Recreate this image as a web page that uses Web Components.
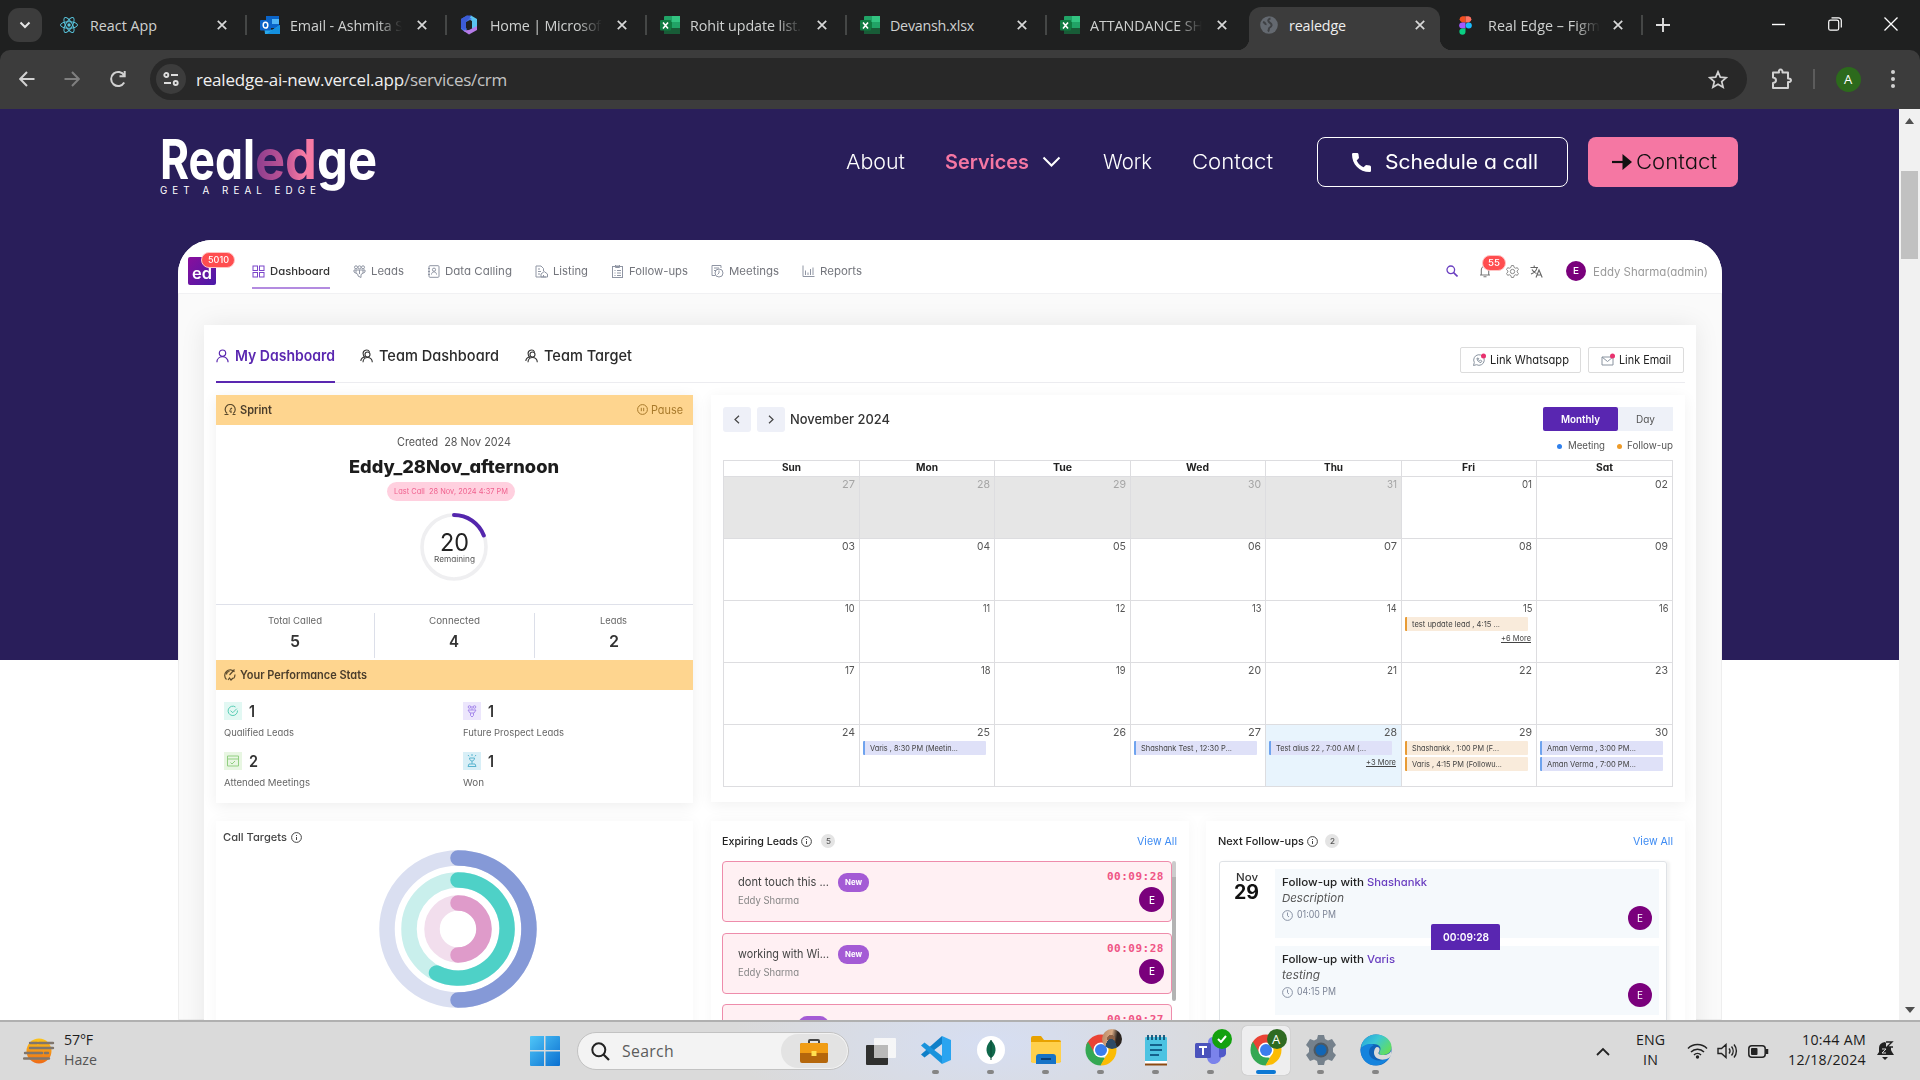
<!DOCTYPE html>
<html lang="en"><head><meta charset="utf-8"><title>realedge</title>
<style>html,body{margin:0;width:1920px;height:1080px;overflow:hidden;background:#fff}</style></head>
<body><desktop-screen></desktop-screen>
<script>
const fits=[];
// Text run set to a known advance width: web page text stretches its glyphs, system text its tracking.
class FitText extends HTMLElement{
  connectedCallback(){
    if(this.shadowRoot)return;
    const a=n=>this.getAttribute(n);
    this.attachShadow({mode:'open'}).innerHTML=`<style>:host{display:inline-block;vertical-align:top;flex:none;white-space:pre;text-align:left;width:${a('w')}px}span{display:block;width:max-content;white-space:pre;transform-origin:0 50%;font-size:${a('s')}px;font-weight:${a('b')||400};${a('c')?'color:'+a('c'):''}}:host([u]) span{text-decoration:underline}:host([g]) span{background:linear-gradient(90deg,#8a3c8d,#c25696 50%,#f77aa4 80%);-webkit-background-clip:text;background-clip:text;color:transparent}</style><span><slot></slot></span>`;
    fits.push(this);
  }
  fit(){
    const s=this.shadowRoot.querySelector('span'),w=+this.getAttribute('w'),n=s.getBoundingClientRect().width;
    if(!n)return;
    if(getComputedStyle(this).fontFamily.startsWith('Inter')&&!this.hasAttribute('track'))s.style.transform=`scaleX(${w/n})`;
    else s.style.letterSpacing=((w-n)/this.textContent.length)+'px';
  }
}
customElements.define('fit-text',FitText);
const T=(t,w,s,b,c,x)=>`<fit-text w="${w}" s="${s}" b="${b||400}" ${c?`c="${c}"`:''} ${x||''}>${t}</fit-text>`;
const svg=(w,h,vb,body,st)=>`<svg width="${w}" height="${h}" viewBox="${vb}" fill="none" style="flex:none;display:block;${st||''}">${body}</svg>`;
const def=(n,css,html)=>customElements.define(n,class extends HTMLElement{
  connectedCallback(){if(!this.shadowRoot)this.attachShadow({mode:'open'}).innerHTML=`<style>*{box-sizing:border-box}:host{display:block;box-sizing:border-box}${css}</style>`+(typeof html=='function'?html(this):html)}
});
const excel=svg(20,18,'0 0 20 18','<rect x="4" width="16" height="18" rx="1" fill="#21a366"/><rect x="12" width="8" height="6" fill="#33c481"/><rect x="4" y="6" width="8" height="6" fill="#107c41"/><rect x="4" y="12" width="16" height="6" fill="#185c37"/><rect y="4" width="11" height="10.500" rx="1" fill="#107c41"/><path d="M3 6.500l5 6M8 6.500l-5 6" stroke="#fff" stroke-width="1.600"/>');
const fav={
react:svg(18,18,'0 0 18 18','<g stroke="#58c4dc" stroke-width="1"><ellipse cx="9" cy="9" rx="8.500" ry="3.300"/><ellipse cx="9" cy="9" rx="8.500" ry="3.300" transform="rotate(60 9 9)"/><ellipse cx="9" cy="9" rx="8.500" ry="3.300" transform="rotate(120 9 9)"/></g><circle cx="9" cy="9" r="1.700" fill="#58c4dc"/>'),
outlook:svg(20,18,'0 0 20 18','<rect x="6" width="13" height="12" fill="#0a64c8"/><rect x="12" y="3" width="7" height="5" fill="#50b5f5"/><path d="M4 9l8 5 8-5v9H5z" fill="#28a8ea"/><path d="M12 14l8-5v9H7z" fill="#1490df"/><rect y="4" width="11" height="10.500" rx="1" fill="#0a64c8"/><ellipse cx="5.500" cy="9.200" rx="2.300" ry="2.900" stroke="#fff" stroke-width="1.500"/>'),
m365:svg(18,20,'0 0 18 20','<path d="M11 .5L17 4v8l-5 2V6L7 3z" fill="#5ac4f0"/><path d="M7 .5L1 4v10l4 3 2-3-1-1V7l6-3z" fill="#4474e0"/><path d="M7 .500L11.500.500 6 7v6l-1 2-4-2V4z" fill="#3c5cd6"/><path d="M3 15.500l6 4 8-4.500v-4l-8 4z" fill="#b57be8"/>'),
excel,
globe:svg(18,18,'0 0 18 18','<circle cx="9" cy="9" r="8.800" fill="#646970"/><path d="M10.500 2.500c-2 .5-3 2-1.500 3.500s3 1.500 2.500 3.500-2 1.500-2.500 3 0 2-1 3M3 6c1.500.5 3 1.500 2.500 3" stroke="#3f4144" stroke-width="2"/>'),
figma:svg(13,19,'0 0 14 20','<path d="M7 0H3.500a3.400 3.400 0 0 0 0 6.700H7z" fill="#f24e1e"/><path d="M7 0h3.500a3.400 3.400 0 0 1 0 6.700H7z" fill="#ff7262"/><path d="M7 6.700H3.500a3.300 3.300 0 0 0 0 6.600H7z" fill="#a259ff"/><circle cx="10.500" cy="10" r="3.300" fill="#1abcfe"/><path d="M7 13.300H3.500A3.300 3.300 0 1 0 7 16.700z" fill="#0acf83"/>')};
const X=svg(10,10,'0 0 10 10','<path d="M.8.8l8.400 8.400M9.200.8L.8 9.200" stroke="#d8d8d8" stroke-width="1.700"/>');

def('browser-tab',`:host{flex:none;width:200px;height:50px;display:flex;align-items:flex-start;padding:7px 6px 0 3px;font-family:"Open Sans",sans-serif}
:host([last]){width:196px}
.b{position:relative;width:191px;height:43px;display:flex;align-items:center;padding:0 15px 7px 11px;border-radius:12px 12px 0 0;color:#cfd1d0}
:host([last]) .b{width:187px;padding-left:10px}
:host([active]) .b{background:#3c3c3c;color:#eee}
:host([active]) .b:before,:host([active]) .b:after{content:"";position:absolute;bottom:0;width:12px;height:12px}
:host([active]) .b:before{left:-12px;background:radial-gradient(circle at 0 0,transparent 12px,#3c3c3c 12.5px)}
:host([active]) .b:after{right:-12px;background:radial-gradient(circle at 100% 0,transparent 12px,#3c3c3c 12.5px)}
.i{width:20px;flex:none}.t{margin-left:9px;width:112px;overflow:hidden;line-height:24px;height:25px;padding-top:1px;flex:none}:host(:not([active]):not([last])) .t{margin-left:10px}
.fade{-webkit-mask-image:linear-gradient(90deg,#000 78%,transparent 100%)}.x{margin-left:auto;margin-right:-2px}:host([active]) .x{margin-right:0}
.s{width:2px;height:20px;background:#454746;margin:8px -7px 0 auto}`,
e=>`<div class="b"><div class="i">${fav[e.getAttribute('icon')]}</div><div class="t ${e.getAttribute('w')>105?'fade':''}">${T(e.getAttribute('label'),e.getAttribute('w'),14.3)}</div><div class="x">${X}</div></div>${e.hasAttribute('sep')?'<div class="s"></div>':''}`);

def('tab-strip',`:host{display:flex;height:50px;background:#1f2020;padding-left:8px}.c{width:34px;height:34px;border-radius:11px;background:#3c3c3c;margin:8px 4px 0 0;display:grid;place-items:center}
.p{margin:18px 0 0 14px}.w{margin-left:auto;display:flex;align-items:center;height:48px;gap:42px;padding-right:22px}`,
`<div class="c">${svg(12,8,'0 0 12 8','<path d="M1.500 1.500L6 6l4.500-4.500" stroke="#e6e6e6" stroke-width="2"/>')}</div>
<browser-tab icon="react" label="React App" w="67" sep></browser-tab><browser-tab icon="outlook" label="Email - Ashmita S" w="113" sep></browser-tab><browser-tab icon="m365" label="Home | Microsof" w="111" sep></browser-tab><browser-tab icon="excel" label="Rohit update list." w="111" sep></browser-tab><browser-tab icon="excel" label="Devansh.xlsx" w="84" sep></browser-tab><browser-tab icon="excel" label="ATTANDANCE SH" w="113"></browser-tab><browser-tab icon="globe" label="realedge" w="57" active></browser-tab><browser-tab icon="figma" label="Real Edge – Figm" w="112" last sep></browser-tab>
<div class="p">${svg(14,14,'0 0 14 14','<path d="M7 0v14M0 7h14" stroke="#ddd" stroke-width="1.900"/>')}</div>
<div class="w">${svg(14,14,'0 0 14 14','<path d="M0 7.500h13" stroke="#fff" stroke-width="1.400"/>')}${svg(14,14,'0 0 14 14','<rect x=".7" y="3.200" width="10" height="10" rx="1.800" stroke="#fff" stroke-width="1.200"/><path d="M3.500.8h7a2.800 2.800 0 0 1 2.800 2.800v7" stroke="#fff" stroke-width="1.200"/>')}${svg(14,14,'0 0 14 14','<path d="M.5.500l13 13M13.500.500l-13 13" stroke="#fff" stroke-width="1.300"/>')}</div>`);

def('address-bar',`:host{height:59px;background:#1f2020}.r{background:#3c3c3c;border-radius:10px 10px 0 0;height:59px;display:flex;align-items:center;padding:0 24px 1px 19px;font-family:"Open Sans",sans-serif}
.o{height:42px;width:1597px;border-radius:21px;background:#282828;margin-left:23px;display:flex;align-items:center;padding:0 19px 0 6px;line-height:30px;flex:none}
.o i{width:30px;height:30px;border-radius:50%;background:#3c3c3c;display:grid;place-items:center;margin-right:10px}
.a{width:25px;height:25px;border-radius:50%;background:#2c6a1c;color:#fff;display:grid;place-items:center;margin:0 30px 0 21px;line-height:20px}`,
`<div class="r">${svg(16,16,'0 0 16 16','<path d="M15.500 8H1.500M8 1L1.200 8 8 15" stroke="#d2d2d2" stroke-width="2"/>')}
${svg(16,16,'0 0 16 16','<path d="M.5 8h14M8 1l6.800 7L8 15" stroke="#7f7f7f" stroke-width="2"/>','margin-left:29px')}
${svg(18,18,'0 0 18 18','<path d="M15.200 12.500a7 7 0 1 1 0-7M15.700 1v5.200h-5.200" stroke="#d2d2d2" stroke-width="2"/>','margin-left:29px')}
<div class="o"><i>${svg(16,14,'0 0 16 14','<g stroke="#ddd" stroke-width="1.900"><circle cx="3.300" cy="3" r="2"/><path d="M8 3h7M1 11h7"/><circle cx="12.700" cy="11" r="2"/></g>')}</i><div style="padding-top:2px">${T('realedge-ai-new.vercel.app',208,17,400,'#f0f0f0')}${T('/services/crm',103,17,400,'#c4c4c4')}</div>
${svg(20,19,'0 0 20 19','<path d="M10 1.800l2.300 5.300 5.900.5-4.500 3.900 1.400 5.700L10 14.200l-5.100 3 1.400-5.700L1.800 7.600l5.900-.5z" stroke="#d2d2d2" stroke-width="1.700"/>','margin-left:auto')}</div>
${svg(21,22,'0 0 21 22','<path d="M2 4.500h6c-1-4 4-4 3.500 0H17v6c4-.5 4 4 0 3.500V20H2v-5c4-.5 4-5 0-5.500z" stroke="#d2d2d2" stroke-width="2" stroke-linejoin="round"/>','margin-left:24px')}
<div style="width:2px;height:20px;background:#5c5c5c;margin-left:21px"></div><div class="a">${T('A',9,13,400)}</div>${svg(4,18,'0 0 4 18','<circle cx="2" cy="2" r="2" fill="#d2d2d2"/><circle cx="2" cy="9" r="2" fill="#d2d2d2"/><circle cx="2" cy="16" r="2" fill="#d2d2d2"/>','')}</div>`);

def('site-header',`:host{height:131px;display:flex;padding-left:160px;color:#fff;align-items:flex-start}
.l{width:218px;margin-top:21px;height:90px}.m{display:flex;line-height:58px;height:58px}
.tag{line-height:12px;margin-top:-3px}
nav{margin:28px 0 0 468px;display:flex;align-items:center;height:50px;line-height:30px}
.b{display:flex;align-items:center;height:50px;border-radius:8px}.o{width:251px;border:1px solid #fff;margin-left:44px;padding-left:34px}.p{width:150px;background:#f577a3;margin-left:20px;padding-left:24px}`,
`<div class="l"><div class="m">${T('Real',95,55,700)}${T('ed',62,55,700,'','g')}${T('ge',60,55,700)}</div><div class="tag">${T('GET A REAL EDGE',161,9.8,400,'','track')}</div></div>
<nav>${T('About',59,20.3,300)}<span style="width:40px"></span>${T('Services',84,20,600,'#f577a3')}${svg(19,12,'0 0 19 12','<path d="M1.500 1.500l8 8 8-8" stroke="#fff" stroke-width="2"/>','margin-left:13px')}<span style="width:42px"></span>${T('Work',49,20.3,300)}<span style="width:40px"></span>${T('Contact',81,20.3,300)}
<div class="b o">${svg(19,19,'0 0 19 19','<path d="M0 1.200Q0 0 1.200 0h4Q6.300 0 6.500 1.200L7 5 4.700 7.500q2 4.500 6.800 6.800L14 12l3.800.6q1.200.2 1.200 1.400v3.800q0 1.200-1.200 1.200C7 19 0 11 0 1.200z" fill="#fff"/>')}<span style="width:14px"></span>${T('Schedule a call',153,20.3,400)}</div>
<div class="b p">${svg(20,16,'0 0 20 16','<path d="M0 8h13" stroke="#111" stroke-width="2.200"/><path d="M10.500 0v16L20 8z" fill="#111"/>')}<span style="width:4px"></span>${T('Contact',81,20.3,300,'#111')}</div></nav>`);

const g='#8f95a3',ic=(b,c)=>svg(13,13,'0 0 13 13',`<g stroke="${c||g}" stroke-width="1">${b}</g>`);
const nI={dash:ic('<rect x="1" y="1" width="4.500" height="4.500"/><rect x="7.500" y="1" width="4.500" height="4.500"/><rect x="1" y="7.500" width="4.500" height="4.500"/><rect x="7.500" y="7.500" width="4.500" height="4.500"/>','#7b45c9'),
leads:ic('<circle cx="3" cy="2.300" r="1.500"/><circle cx="6.500" cy="2.300" r="1.500"/><circle cx="10" cy="2.300" r="1.500"/><path d="M1 5h11v2L8 9.500v3L5 11V9.500L1 7zM3 5v3M6.500 5v4M10 5v3"/>'),
data:ic('<rect x="2" y=".7" width="10" height="11.600" rx="1"/><circle cx="7" cy="4.700" r="1.600"/><path d="M4.500 9.500c0-3.500 5-3.500 5 0M1 3.500h2M1 6.500h2M1 9.500h2"/>'),
list:ic('<path d="M11 12H1V1h5l2.500 2.500V6M3 4h2M3 6.500h3M3 9h2M6 12V9l3.200-2.500L12.500 9v3zM8.500 12v-2"/>'),
fol:ic('<rect x="1.500" y="1.500" width="10" height="11"/><path d="M4.500 0h4v2.500h-4zM3.500 5.500h1M6 5.500h4M3.500 8h1M6 8h4M3.500 10.500h1M6 10.500h4"/>'),
meet:ic('<path d="M4 10.500H1v-10h9V3M3 3h5M3 5.500h2"/><circle cx="8" cy="8" r="4"/><path d="M8 5.500V8L6.500 9.500"/>'),
rep:ic('<path d="M1 .5v11h11.500M3.500 10V5.500M6 10V7.500M8.500 10V4M11 10V2.500"/>')};
def('crm-nav',`:host{display:flex;height:54px;border-bottom:1px solid #f1f1f3;padding:0 14px 0 10px;background:#fff;line-height:20px}
.q{position:relative;width:28px;height:28px;margin-top:17px;border-radius:2px;background:linear-gradient(135deg,#8a0f9c,#4a1aa8);display:grid;place-items:end center;line-height:20px;padding-bottom:2px}
.bd{position:absolute;background:#ff4d4f;border:1px solid #ffc4c4;border-radius:9px;color:#fff;display:grid;place-items:center;height:16px;line-height:14px}
.m{display:flex;gap:23px;margin-left:36px}.i{display:flex;align-items:center;gap:5px;padding-top:15px;height:49px;border-bottom:2px solid transparent}.on{border-color:#b38be0}
.r{margin-left:auto;display:flex;align-items:center;height:62px}.a{width:20px;height:20px;border-radius:50%;background:#7a007c;display:grid;place-items:center}`,
`<div class="q">${T('ed',20,16,600,'#fff')}<span class="bd" style="left:13px;top:-5px;width:34px">${T('5010',21,8.5,500)}</span></div>
<div class="m">${[['dash','Dashboard',60],['leads','Leads',33],['data','Data Calling',67],['list','Listing',35],['fol','Follow-ups',59],['meet','Meetings',50],['rep','Reports',42]].map((x,i)=>`<div class="i ${i?'':'on'}">${nI[x[0]]}${T(x[1],x[2],11,i?400:500,i?'#73757c':'#333')}</div>`).join('')}</div>
<div class="r">${svg(12,12,'0 0 12 12','<circle cx="4.800" cy="4.800" r="3.800" stroke="#6a3fc0" stroke-width="1.300"/><path d="M7.600 7.600L11.500 11.500" stroke="#6a3fc0" stroke-width="1.600"/>')}
<span style="position:relative;margin-left:21px">${svg(12,14,'0 0 12 14','<path d="M1 11h10M2.300 11V6a3.700 3.700 0 0 1 7.400 0v5M4.500 12.800h3" stroke="#777" stroke-width="1.100"/>')}<span class="bd" style="left:3px;top:-9px;width:24px">${T('55',12,9,500)}</span></span>
${svg(13,13,'0 0 24 24','<path d="M10 1h4l1 3.500 2.500 1.400L21 5l2 3.500-2.500 2.500v2L23 15.500 21 19l-3.500-1-2.500 1.500L14 23h-4l-1-3.500L6.500 18 3 19l-2-3.500L3.500 13v-2L1 8.500 3 5l3.500.900L9 4.500z" stroke="#888" stroke-width="1.800"/><circle cx="12" cy="12" r="4" stroke="#888" stroke-width="1.800"/>','margin-left:15px')}
${svg(13,13,'0 0 13 13','<path d="M.5 2.500h7.500M4.200.5v2M7 2.500C6.500 6 3.500 8 1 9M2 4.500c1 2 3 3.500 4.500 4M6 12.500l3-7.500 3.200 7.500M7 10h4.300" stroke="#666" stroke-width="1.100"/>','margin-left:11px')}
<span class="a" style="margin:0 7px 0 23px">${T('E',6,9.500,500,'#fff')}</span><span style="padding-top:2px">${T('Eddy Sharma(admin)',115,11.3,400,'#9a9a9a')}</span></div>`);

const person=c=>svg(13,14,'0 0 13 14',`<circle cx="6.500" cy="4.200" r="3.200" stroke="${c}" stroke-width="1.200"/><path d="M.9 13.300c0-7.500 11.200-7.500 11.200 0" stroke="${c}" stroke-width="1.200"/>`);
const team=svg(13,14,'0 0 13 14','<g stroke="#333" stroke-width="1.100"><circle cx="7.500" cy="5.500" r="2.500"/><path d="M3 13.300c0-6.500 9.300-6.500 9.300 0M5 8.500C2.500 6.500 2.200 2 5.500 1.200S9 2 9.500 3M4.500 8C2 8.500 1 10 .8 12"/></g>');
def('crm-tabs',`:host{display:flex;height:58px;border-bottom:1px solid #ececf0;align-items:stretch;line-height:22px}.t{display:flex;gap:6px;align-items:center;height:58px;padding:6px 0 0;border-bottom:2px solid transparent}.on{border-color:#5a27b0;width:119px}
.b{height:26px;border:1px solid #dcdcdc;border-radius:2px;margin-top:22px;display:flex;align-items:center;background:#fff}`,
`<div class="t on" style="margin-right:25px">${person('#5a27b0')}${T('My Dashboard',100,15,600,'#5a27b0')}</div><div class="t" style="margin-right:26px">${team}${T('Team Dashboard',120,15,500,'#2b2b2b')}</div><div class="t">${team}${T('Team Target',88,15,500,'#2b2b2b')}</div>
<div class="b" style="margin-left:auto;width:121px;padding-left:11px">${svg(14,14,'0 0 14 14','<path d="M1.500 12.500l.8-3a5.300 5.300 0 1 1 2.200 2.200zM5 5c0 3 2 4.500 4 4.500l1-1.300-1.500-1-1 .6L6.300 6.500l.5-1z" stroke="#8a94a0" stroke-width="1"/><circle cx="11.500" cy="3" r="2.500" fill="#e8326e"/>')}<span style="width:4px"></span>${T('Link Whatsapp',79,11.4,400,'#222')}</div>
<div class="b" style="margin-left:7px;width:96px;padding-left:12px">${svg(14,14,'0 0 14 14','<path d="M1 4h11v8H1zM1 4l5.500 4.500L12 4" stroke="#8a94a0" stroke-width="1"/><circle cx="11.500" cy="3" r="2.500" fill="#e8326e"/>')}<span style="width:4px"></span>${T('Link Email',52,11.4,400,'#222')}</div><span style="width:1px"></span>`);

const sI=[
svg(18,18,'0 0 18 18','<rect width="18" height="18" fill="#e2f8f3"/><path d="M13.500 8.500a4.700 4.700 0 1 1-2-3.500M6.500 8.700l2.300 2 4-4" stroke="#58cdb5" stroke-width="1"/>'),
svg(18,18,'0 0 18 18','<rect width="18" height="18" fill="#ece6fc"/><g stroke="#a78aec" stroke-width="1"><circle cx="6.500" cy="5" r="1.300"/><circle cx="11.500" cy="5" r="1.300"/><path d="M5 8h8l-2 3H7zM7.500 11v2.500L9 15l1.500-1.500V11M9 4v4"/></g>'),
svg(18,18,'0 0 18 18','<rect width="18" height="18" fill="#e8f6e2"/><path d="M3.500 4h11v10h-11zM3.500 7h11M6.500 10.500L8 12l3-3" stroke="#92cf82" stroke-width="1"/>'),
svg(18,18,'0 0 18 18','<rect width="18" height="18" fill="#d8eff7"/><path d="M6.500 6h5c0 4-5 4-5 0M9 9v3M5 14.500h8L12 12H6zM9 2v2M5 3l1 1.300M13 3l-1 1.300" stroke="#58b4cf" stroke-width="1"/>')];
def('sprint-card',`:host{width:477px;height:408px;background:#fff;box-shadow:0 3px 14px rgba(0,0,0,.07);color:#444}
.h{height:30px;background:#fed58f;display:flex;align-items:center;padding:0 10px 1px 8px;gap:4px;line-height:20px}
.c{display:flex;flex-direction:column;align-items:center;height:179px;padding-right:1px}.pill{height:19px;width:128px;border-radius:10px;background:#ffd0df;display:grid;place-items:center;line-height:16px;margin-right:7px}
.ring{display:grid;margin-top:12px;width:68px;height:68px}.ring>*{grid-area:1/1}.in{display:flex;flex-direction:column;align-items:center;padding-top:16px}
.s{display:flex;height:56px;border-top:1px solid #dfe1ea;align-items:flex-start;padding-top:8px}.s div{flex:1;height:45px;border-right:1px solid #dcdfe9;display:flex;flex-direction:column;align-items:center;line-height:15px;gap:6px}.s div:last-child{border:0}
.g{display:grid;grid-template-columns:239px 1fr;padding:12px 0 0 8px;grid-auto-rows:50px}.n{display:flex;align-items:center;gap:7px;height:18px;line-height:17px}.l{line-height:16px;margin-top:5px}`,
`<div class="h">${svg(12,12,'0 0 12 12','<path d="M4.500 10.500H.5M11.500 10.500H8.500M3.200 9.500a5 5 0 1 1 6 0M6 5.500l2-1.500M5 7h2v2" stroke="#5b4a2c" stroke-width="1.200"/>')}${T('Sprint',32,11.3,600,'#4a3d2b')}<span style="margin-left:auto"></span>${svg(11,11,'0 0 11 11','<circle cx="5.500" cy="5.500" r="4.900" stroke="#a87a2b"/><path d="M4.300 3.800v3.400M6.700 3.800v3.400" stroke="#a87a2b"/>','margin-right:-1px')}${T('Pause',32,11.3,400,'#a87a2b')}</div>
<div class="c"><div style="line-height:18px;margin-top:8px">${T('Created  28 Nov 2024',114,11.2,400,'#555')}</div><div style="line-height:24px;margin-top:4px;height:27px">${T('Eddy_28Nov_afternoon',210,18,800,'#1c1c1c')}</div>
<div class="pill">${T('Last Call  28 Nov, 2024 4:37 PM',114,7.7,400,'#f0628f')}</div>
<div class="ring">${svg(68,68,'0 0 68 68','<circle cx="34" cy="34" r="32" stroke="#efeff1" stroke-width="3.600"/><path d="M34 2a32 32 0 0 1 29.800 20.500" stroke="#5426ad" stroke-width="4" stroke-linecap="round"/>')}<div class="in"><span style="line-height:26px">${T('20',29,24.5,400,'#222')}</span><span style="line-height:9px">${T('Remaining',41,7.8,400,'#555')}</span></div></div></div>
<div class="s"><div>${T('Total Called',54,9.4,400,'#666')}${T('5',10,16.5,600,'#333')}</div><div>${T('Connected',51,9.4,400,'#666')}${T('4',10,16.5,600,'#333')}</div><div>${T('Leads',27,9.4,400,'#666')}${T('2',10,16.5,600,'#333')}</div></div>
<div class="h">${svg(13,13,'0 0 13 13','<path d="M11.500 4a5.500 5.500 0 1 0-8 7.500M12 6.500c0 2-.5 3-1.500 4M6.500 7L11.500 1.500M3.500 6.500a3 3 0 0 1 3-3M5 12l1.500-2L8 12l2-2" stroke="#5b4a2c" stroke-width="1.200"/>','margin-left:-1px')}${T('Your Performance Stats',127,11.3,600,'#4a3d2b')}</div>
<div class="g">${[['1','Qualified Leads',70],['1','Future Prospect Leads',101],['2','Attended Meetings',86],['1','Won',21]].map((x,i)=>`<div><div class="n">${sI[i]}${T(x[0],x[0]=='1'?6:9,16.5,600,'#333')}</div><div class="l">${T(x[1],x[2],9.4,400,'#666')}</div></div>`).join('')}</div>`);

// Calendar entries keyed by grid cell: 'b' is a meeting, 'o' a follow-up.
const events={19:[['o','test update lead , 4:15 ...',88],'+6 More'],29:[['b','Varis , 8:30 PM (Meetin...',88]],31:[['b','Shashank Test , 12:30 P...',91]],32:[['b','Test alius 22 , 7:00 AM (...',90],'+3 More'],33:[['o','Shashankk , 1:00 PM (F...',87],['o','Varis , 4:15 PM (Followu...',90]],34:[['b','Aman Verma , 3:00 PM...',89],['b','Aman Verma , 7:00 PM...',89]]};
def('day-cell',`:host{border-right:1px solid #dddde0;border-bottom:1px solid #dddde0;height:62px;padding:1px 4px 0 3px;display:flex;flex-direction:column;color:#555}
:host([out]){background:#e6e6e6;color:#a5a5a5}:host([today]){background:#e8f4fd}
.n{align-self:flex-end;line-height:13px;height:15px}.e{height:14px;margin-bottom:2px;width:123px;border-left:2px solid #6fa3ee;background:#dfe1f8;padding-left:5px;line-height:14px;flex:none;border-radius:1px}.o{border-color:#e89b35;background:#f9ebdb}
.m{align-self:flex-end;line-height:11px;margin-right:1px}`,
e=>{const i=+e.getAttribute('i'),d=i<5?27+i:i-4;return `<div class="n">${T(String(d).padStart(2,'0'),d==11?7:String(d).includes('1')?(d==1||d==31||d==21?10:9.5):13,11,400)}</div>`+(events[i]||[]).map(v=>typeof v=='string'?`<div class="m">${T(v,30,8.2,400,'#444','u')}</div>`:`<div class="e ${v[0]}">${T(v[1],v[2],7.800,400,'#444')}</div>`).join('')});
const chv=d=>svg(6,9,'0 0 6 9',`<path d="${d}" stroke="#444" stroke-width="1.200"/>`);
def('calendar-card',`:host{width:974px;height:407px;background:#fff;box-shadow:0 3px 14px rgba(0,0,0,.06);padding:12px 12px 0 12px}
.t{display:flex;height:25px;align-items:center;line-height:18px}.a{width:28px;height:25px;border-radius:3px;background:#eef0f8;display:grid;place-items:center;margin-right:6px}
.v{height:24px;display:grid;place-items:center;margin-bottom:1px}.l{display:flex;justify-content:flex-end;align-items:center;height:28px;line-height:14px}.d{width:5px;height:5px;border-radius:50%}
.g{display:grid;grid-template-columns:repeat(6,135.5px) 136px;border:1px solid #dddde0;border-right:0;border-bottom:0;width:950px}.h{height:16px;text-align:center;line-height:14px;border-right:1px solid #dddde0;border-bottom:1px solid #dddde0}`,
`<div class="t"><span class="a">${chv('M5 .8L1 4.500l4 3.700')}</span><span class="a" style="margin-right:5px">${chv('M1 .8l4 3.700L1 8.200')}</span><span style="padding-bottom:2px">${T('November 2024',100,13,500,'#333')}</span><span class="v" style="margin-left:auto;width:75px;background:#5926b1;border-radius:2px">${T('Monthly',39,10.3,600,'#fff')}</span><span class="v" style="width:55px;background:#eef1f8">${T('Day',19,10.3,400,'#555')}</span></div>
<div class="l"><span class="d" style="background:#2f80ed"></span><span style="width:6px"></span>${T('Meeting',37,9.7,400,'#555')}<span class="d" style="background:#ef9b28;margin:0 5px 0 12px"></span>${T('Follow-up',46,9.7,400,'#555')}</div>
<div class="g">${[['Sun',19],['Mon',22],['Tue',19],['Wed',23],['Thu',19],['Fri',13],['Sat',17]].map(x=>`<div class="h">${T(x[0],x[1],9.700,700,'#222')}</div>`).join('')}${Array.from({length:35},(_,i)=>`<day-cell i="${i}" ${i<5?'out':''} ${i==32?'today':''}></day-cell>`).join('')}</div>`);

const info=svg(11,11,'0 0 11 11','<circle cx="5.500" cy="5.500" r="4.900" stroke="#444"/><path d="M5.500 5v3M5.500 3v1" stroke="#444"/>');
const R=(r,c)=>`<circle cx="80" cy="80" r="${r}" stroke="${c}" stroke-width="15.500"/>`;
def('targets-card',`:host{width:477px;height:230px;background:#fff;padding:8px 7px;box-shadow:0 0 14px rgba(0,0,0,.04)}.h{display:flex;gap:4px;align-items:center;line-height:15px;height:16px}`,
`<div class="h">${T('Call Targets',64,11,500,'#444')}${info}</div>${svg(160,160,'0 0 160 160',R(71,'#dadff1')+R(49,'#c9efec')+R(26,'#f2deed')+'<g stroke-width="15.500" stroke-linecap="round"><path d="M80 9a71 71 0 0 1 0 142" stroke="#8599d7"/><path d="M80 31a49 49 0 1 1-21.500 93" stroke="#4ed1c7"/><path d="M80 54a26 26 0 0 1 0 52" stroke="#df9bca"/></g>','margin:4px 0 0 155px')}`);
def('lead-row',`:host{height:61px;border:1px solid #ee8cab;border-radius:4px;background:#fff0f3;margin-bottom:10.5px;display:flex;justify-content:space-between;padding:11px 7px 0 15px;line-height:18px;flex:none}
.a{display:flex;align-items:center;gap:9px;height:19px;line-height:17px}.n{width:31px;height:19px;border-radius:9px;background:#a45bd5;display:grid;place-items:center}.r{display:flex;flex-direction:column;align-items:flex-end;margin-top:-5px}.c{width:25px;height:25px;border-radius:50%;background:#7a007c;display:grid;place-items:center;margin-top:1px}.k{font-family:"DejaVu Sans Mono",monospace;height:18px;line-height:18px}`,
e=>{const l=e.getAttribute('label');return `<div><div class="a">${l?T(l,91,11.700,400,'#444'):'<span style="width:51px"></span>'}<span class="n">${l?T('New',17,7.800,700,'#fff'):''}</span></div><div style="line-height:17px">${l?T('Eddy Sharma',61,9.700,400,'#858585'):''}</div></div><div class="r"><span class="k">${T(e.getAttribute('time'),57,11,700,'#ef5585')}</span>${l?`<span class="c">${T('E',6,10,500,'#fff')}</span>`:''}</div>`});
def('leads-card',`:host{width:478px;height:230px;background:#fff;padding:11px 12px 0 11px;box-shadow:0 0 14px rgba(0,0,0,.04)}.h{display:flex;align-items:center;height:18px;line-height:17px}.b{width:14px;height:14px;border-radius:50%;background:#e4e4e4;display:grid;place-items:center;margin-left:9px;line-height:12px}
.l{display:flex;margin-top:11px}.x{width:450px;flex:none}.s{width:4px;height:140px;background:linear-gradient(#ccc 16px,#b3b3b3 16px);border-radius:2px;margin-left:0}`,
`<div class="h">${T('Expiring Leads',76,11,500,'#222')}<span style="width:3px"></span>${info}<span class="b">${T('5',5,8,500,'#555')}</span><span style="margin-left:auto"></span>${T('View All',40,11,400,'#3f8cf3')}</div>
<div class="l"><div class="x"><lead-row label="dont touch this ..." time="00:09:28"></lead-row><lead-row label="working with Wi..." time="00:09:28"></lead-row><lead-row time="00:09:27"></lead-row></div><div class="s"></div></div>`);
def('followup-row',`:host{height:69px;width:384px;background:#f5f9fc;margin-bottom:8px;display:flex;justify-content:space-between;padding:5px 7px 0;line-height:16px}.c{width:24px;height:24px;border-radius:50%;background:#7a007c;display:grid;place-items:center;margin-top:32px}.t{display:flex;align-items:center;gap:4px;margin-top:1px}`,
e=>{const a=n=>e.getAttribute(n);return `<div><div>${T('Follow-up with ',85,11,500,'#222')}${T(a('who'),a('ww'),11,500,'#6a3fc0')}</div><div style="font-style:italic">${T(a('d'),a('dw'),11,400,'#555')}</div><div class="t">${svg(11,11,'0 0 11 11','<circle cx="5.500" cy="5.500" r="4.900" stroke="#8a93a5"/><path d="M5.500 2.500v3.200L7 7" stroke="#8a93a5"/>')}${T(a('at'),39,9.700,400,'#7d8597')}</div></div><span class="c">${T('E',6,10,400,'#fff')}</span>`});
def('followups-card',`:host{width:479px;height:230px;background:#fff;padding:11px 12px 0 12px;box-shadow:0 0 14px rgba(0,0,0,.04)}.h{display:flex;align-items:center;height:18px;line-height:17px}.b{width:14px;height:14px;border-radius:50%;background:#e4e4e4;display:grid;place-items:center;margin-left:7px;line-height:12px}
.l{position:relative;display:flex;margin:11px 0 0 1px;width:448px;height:180px;border:1px solid #dfe2e6;border-radius:3px;box-shadow:3px 0 3px rgba(0,0,0,.05);padding-top:7px}.d{width:55px;padding:1px 2px 0 0;display:flex;flex-direction:column;align-items:center;line-height:15px}
.k{position:absolute;left:211px;top:62px;width:69px;height:26px;background:#5926b1;border-radius:2px 2px 0 0;display:grid;place-items:center;line-height:16px}`,
`<div class="h">${T('Next Follow-ups',86,11,500,'#222')}<span style="width:3px"></span>${info}<span class="b">${T('2',5,8,500,'#555')}</span><span style="margin-left:auto"></span>${T('View All',40,11,400,'#3f8cf3')}</div>
<div class="l"><div class="d">${T('Nov',22,10.5,500,'#333')}${T('29',25,19.5,700,'#111')}</div><div><followup-row who="Shashankk" ww="60" d="Description" dw="62" at="01:00 PM"></followup-row><followup-row who="Varis" ww="28" d="testing" dw="38" at="04:15 PM"></followup-row></div><span class="k">${T('00:09:28',46,11,600,'#fff')}</span></div>`);
def('crm-panel',`:host{width:1544px;height:780px;margin-left:178px;background:#fafafa;border-radius:34px 34px 0 0;overflow:hidden;flex:none;box-shadow:inset 0 0 0 1px #eee}
.c{margin:31px 26px 0;padding:0 11px 0 12px;background:#fff;box-shadow:0 0 24px rgba(0,0,0,.08);width:1492px;height:740px}.r{display:flex;align-items:flex-start}`,
`<crm-nav></crm-nav><div class="c"><crm-tabs></crm-tabs><div class="r" style="gap:18px;padding-top:12px;height:438px"><sprint-card></sprint-card><calendar-card></calendar-card></div><div class="r"><targets-card></targets-card><leads-card style="margin-left:18px"></leads-card><followups-card style="margin-left:17px"></followups-card></div></div>`);
def('page-scrollbar',`:host{width:21px;background:#f1f1f1;display:flex;flex-direction:column;align-items:center;padding:9px 0 7px;height:911px}.t{width:17px;height:88px;background:#c1c1c1;margin-top:47px}`,
`${svg(9,6,'0 0 9 6','<path d="M0 6l4.500-6L9 6z" fill="#505050"/>')}<div class="t"></div>${svg(10,6,'0 0 10 6','<path d="M0 0h10L5 6z" fill="#505050"/>','margin-top:auto')}`);

let uid=0;
const chrome=()=>{const c='c'+uid++;return svg(32,32,'0 0 32 32',`<defs><clipPath id="${c}"><circle cx="16" cy="16" r="15.500"/></clipPath></defs><g clip-path="url(#${c})"><path d="M0 0h32v11H16L9 20-4 6z" fill="#ea4335"/><path d="M2 6l8 14 6 3 4 1-5 9H-2V6z" fill="#34a853"/><path d="M16 9h18v25H14l8-14z" fill="#fbbc04"/></g><circle cx="16" cy="16" r="7.600" fill="#fff"/><circle cx="16" cy="16" r="6" fill="#3b7ded"/>`)};
const app={
vs:svg(32,30,'0 0 32 30','<path d="M22 1l9 4v20l-9 4z" fill="#2aa4f0"/><path d="M22 1L1 19.500l3.500 3L22 9z" fill="#0f7fc8"/><path d="M22 29L1 10.500l3.500-3L22 21z" fill="#1993dc"/>'),
mongo:svg(28,28,'0 0 28 28','<circle cx="14" cy="14" r="14" fill="#fff"/><path d="M14 4c-7 7-5 15 0 18 5-3 7-11 0-18z" fill="#10684b"/><path d="M14 4v20" stroke="#0b4b36"/>'),
files:svg(32,28,'0 0 32 28','<path d="M1 2Q1 0 3 0h8l3 4h15q2 0 2 2v20H1z" fill="#e8a200"/><path d="M1 6h30v19q0 2-2 2H3q-2 0-2-2z" fill="#ffd04c"/><path d="M6 28v-7q0-3 3-3h14q3 0 3 3v7z" fill="#1673c7"/><path d="M11 23h10" stroke="#083f78" stroke-width="2"/>'),
note:svg(24,32,'0 0 24 32','<rect x="1" y="3" width="22" height="25" rx="1" fill="#4cc3e2"/><path d="M1 27h22v3q0 1-1 1H2q-1 0-1-1z" fill="#fff"/><path d="M1 30.500h22" stroke="#8c4a12" stroke-width="2"/><path d="M6 11h12M6 16h12M6 21h9" stroke="#14618c" stroke-width="2"/><path d="M4 1v5M8 1v5M12 1v5M16 1v5M20 1v5" stroke="#0e5277" stroke-width="1.800"/>'),
teams:svg(32,28,'0 0 32 28','<circle cx="18" cy="6" r="5" fill="#7b83eb"/><path d="M12 10h14v10a7 7 0 0 1-14 2z" fill="#7b83eb"/><path d="M24 10h7v8a5 5 0 0 1-7 3z" fill="#5059c9"/><rect y="7" width="16" height="15" rx="1.500" fill="#4b53bc"/><path d="M4 11h8M8 11v8" stroke="#fff" stroke-width="2"/>'),
gear:svg(32,32,'0 0 32 32','<path d="M13 1h6l1 4 3 1.500L27 5l4 6-3 3v4l3 3-4 6-4-1.500-3 1.500-1 4h-6l-1-4-3-1.500L5 27l-4-6 3-3v-4l-3-3 4-6 4 1.500L12 5z" fill="#75818c"/><circle cx="16" cy="16" r="7.500" fill="#4d5963"/><circle cx="16" cy="16" r="5.500" fill="#1266b5"/>'),
edge:svg(32,32,'0 0 32 32','<defs><linearGradient id="e1" x1="0" y1="0" x2="1" y2=".6"><stop stop-color="#249fdc"/><stop offset=".5" stop-color="#3cc8d4"/><stop offset="1" stop-color="#61dd62"/></linearGradient></defs><circle cx="16" cy="16" r="15.500" fill="#0f62b8"/><path d="M1 14C2 5 9 .5 16 .5c9 0 15.500 6 15.500 12.500 0 6-5 8-9 8-3 0-4-1.500-3-3 3-5-1-8-6-8C8 10 2 13 1 14z" fill="url(#e1)"/><path d="M.6 15C4 10 10 9 14 11c-5 2-6 7-4 11 3 5 11 6 19 2-5 7-12 8-17 7C5 29.500.5 23 .6 15z" fill="#1583dd"/><path d="M19 18c-1.500 1.500 0 3 4 3 5 0 7-2 8-4 1 3 0 5-2 7-8 4-15 0-15-5 0-4 2-6 3-6 3 0 3 3 2 5z" fill="#dadada"/>')};
def('task-icon',`:host{width:55px;flex:none;display:grid;place-items:center}.b{position:relative;width:48px;height:49px;border-radius:5px;display:flex;flex-direction:column;align-items:center;margin-top:-1px}:host([active]) .b{background:#eeeeef;box-shadow:0 0 1px #999}
.i{height:32px;margin-top:8px;display:grid;place-items:center}.d{width:7px;height:4px;border-radius:2px;background:#858585;margin-top:4px}:host([active]) .d{width:20px;background:#0c78d4}
.o{position:absolute;right:3px;top:3px;width:20px;height:20px;border-radius:50%;display:grid;place-items:center;line-height:18px;overflow:hidden}`,
e=>{const n=e.getAttribute('name'),g=e.getAttribute('over');return `<div class="b"><div class="i">${n=='chrome'?chrome():app[n]}</div>${g=='photo'?'<span class="o" style="background:radial-gradient(ellipse at 45% 110%,#2c4a66 38%,transparent 40%),radial-gradient(circle at 45% 48%,#8c6146 24%,transparent 26%),linear-gradient(100deg,#b98563,#d8ab85 45%,#2b2420 70%)"></span>':g=='ok'?`<span class="o" style="background:#13a10e">${svg(10,8,'0 0 10 8','<path d="M1 4l3 3 5-6" stroke="#fff" stroke-width="2"/>')}</span>`:g=='A'?`<span class="o" style="background:#2f6b22;color:#fff">${T('A',9,13,400)}</span>`:''}<span class="d"></span></div>`});
def('task-bar',`:host{height:60px;border-top:2px solid #b0b0b0;background:radial-gradient(ellipse 260px 90px at 990px 20px,#d6def2,rgba(218,218,218,0)),#dadada;display:flex;align-items:center;font-family:"Open Sans",sans-serif;color:#1c1c1c;line-height:20px;padding-left:23px}
.w{margin-left:9px;width:60px;display:flex;flex-direction:column;margin-top:-2px}.s{width:272px;height:38px;border-radius:19px;background:#f3f3f3;border:1px solid #c2c2c2;margin-left:17px;display:flex;align-items:center;padding:0 1px 0 13px}.k{width:66px;height:34px;border-radius:17px;background:#e3e3e3;display:grid;place-items:center;margin-left:auto}
.r{margin-left:auto;display:flex;align-items:center;padding-right:26px}.col{display:flex;flex-direction:column;align-items:center}`,
`${svg(32,26,'0 0 32 26','<defs><linearGradient id="sn" x1="0" y1="0" x2="0" y2="1"><stop stop-color="#fcc419"/><stop offset="1" stop-color="#ee6a16"/></linearGradient></defs><circle cx="16" cy="13" r="12.500" fill="url(#sn)"/><path d="M7 5h7M16 5h14M7 10h23M2 15h17M22 15h3M1 20.500h25" stroke="#80766c" stroke-width="2.400" stroke-linecap="round"/>')}
<div class="w">${T('57°F',29,14.2)}${T('Haze',33,14.2,400,'#555')}</div>
${svg(30,30,'0 0 30 30','<defs><linearGradient id="wn" x1="0" y1="0" x2="1" y2="1"><stop stop-color="#4fc6f8"/><stop offset="1" stop-color="#0a6fd0"/></linearGradient></defs><path d="M0 1q0-1 1-1h13v14H0zM15.500 0H29q1 0 1 1v13H15.500zM0 15.500h14V30H1q-1 0-1-1zM15.500 15.500H30V29q0 1-1 1H15.500z" fill="url(#wn)"/>','margin-left:406px')}
<div class="s">${svg(19,19,'0 0 19 19','<circle cx="7.800" cy="7.800" r="6.500" stroke="#222" stroke-width="2"/><path d="M12.500 12.500l5.500 5.500" stroke="#222" stroke-width="2.200"/>')}<span style="width:12px"></span>${T('Search',52,15.8,400,'#5c5c5c')}<span class="k">${svg(30,24,'0 0 30 24','<path d="M10 5V2q0-1 1-1h8q1 0 1 1v3" stroke="#444" stroke-width="2"/><rect x="1" y="4" width="28" height="20" rx="2" fill="#b5670c"/><path d="M1 6q0-2 2-2h24q2 0 2 2v8H1z" fill="#f19d15"/><rect x="12.500" y="12" width="5" height="5" fill="#ffe04f"/>')}</span></div>
${svg(30,29,'0 0 30 29','<rect y="8" width="22" height="20" rx="1" fill="#2f302f"/><rect x="8" y="1" width="22" height="20" rx="1" fill="#f7f7f7" opacity=".93"/><path d="M8 8h14v13H8z" fill="#b9b9b9"/>','margin:0 10px 0 17px')}
<span style="width:2px"></span><task-icon name="vs"></task-icon><task-icon name="mongo"></task-icon><task-icon name="files"></task-icon><task-icon name="chrome" over="photo"></task-icon><task-icon name="note"></task-icon><task-icon name="teams" over="ok"></task-icon><task-icon name="chrome" over="A" active></task-icon><task-icon name="gear"></task-icon><task-icon name="edge"></task-icon>
<div class="r">${svg(14,9,'0 0 14 9','<path d="M1 8l6-6 6 6" stroke="#222" stroke-width="1.800"/>')}<div class="col" style="margin:-2px 22px 0 26px">${T('ENG',29,14.2)}${T('IN',15,14.2)}</div>
${svg(21,16,'0 0 21 16','<path d="M1 5.500a13.500 13.500 0 0 1 19 0M4 9a9 9 0 0 1 13 0M7 12a5 5 0 0 1 7 0" stroke="#222" stroke-width="1.500"/><circle cx="10.500" cy="14" r="1.700" fill="#222"/>')}
${svg(21,16,'0 0 21 16','<path d="M1 5.500h3.500L9 1.500v13L4.500 10.500H1zM12 5.500a4 4 0 0 1 0 5M14.500 3.500a7 7 0 0 1 0 9M17 1.500a10 10 0 0 1 0 13" stroke="#222" stroke-width="1.400"/>','margin-left:9px')}
${svg(21,13,'0 0 21 13','<rect x=".8" y=".8" width="16.400" height="11.400" rx="3" stroke="#222" stroke-width="1.500"/><rect x="3" y="3" width="6.500" height="7" rx="1" fill="#222"/><path d="M19 4v5" stroke="#222" stroke-width="2.500"/>','margin-left:10px')}
<div class="col" style="align-items:flex-end;margin:-2px 11px 0 19px;width:78px">${T('10:44 AM',64,14.2)}${T('12/18/2024',78,14.2)}</div>
${svg(17,20,'0 0 17 20','<path d="M0 14l2-3V7q0-5 6-6l1 1v4h5v3l1 2 2 3zM5 16h6l-3 3z" fill="#222"/><path d="M9 1h6l-5 5h6M5 8h4l-4 4h4" stroke="#222" stroke-width="1.400"/><path d="M5 8h4l-4 4h4" stroke="#dadada"/>')}</div>`);
def('desktop-screen',`:host{display:flex;flex-direction:column;width:1920px;height:1080px;overflow:hidden}.p{display:flex;height:911px;flex:none}.v{width:1899px;height:911px;overflow:hidden;background:linear-gradient(#291e5a 551px,#fff 551px);font-family:Inter,sans-serif;font-feature-settings:"cv11"}`,
`<tab-strip></tab-strip><address-bar></address-bar><div class="p"><div class="v"><site-header></site-header><crm-panel></crm-panel></div><page-scrollbar></page-scrollbar></div><task-bar></task-bar>`);
fits.forEach(f=>f.fit());
</script></body></html>
